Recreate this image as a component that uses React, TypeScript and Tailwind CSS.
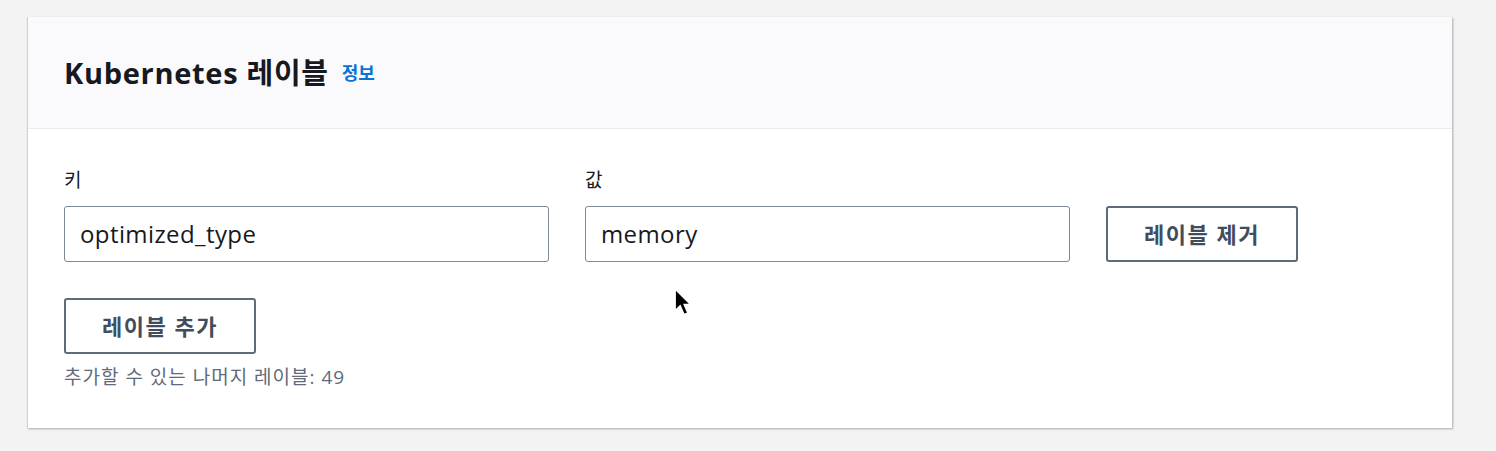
import React from "react";

const font = { fontFamily: '"Open Sans", "Noto Sans CJK KR", sans-serif' };

export default function App() {
  return (
    <div className="w-[1496px] h-[451px] bg-[#f3f3f3] pt-[17px] pl-[27px] relative" style={font}>
      <div className="w-[1425px] h-[411px] bg-white border-l border-[#cfcfcf] shadow-[1px_1px_2px_rgba(0,0,0,0.3)] flex flex-col">
        <div className="h-[112px] bg-[#fafafc] border-b border-[#e9ebed] flex items-center px-[36px]">
          <h2 className="text-[29px] tracking-[0.7px] font-bold text-[#16191f]">Kubernetes 레이블</h2>
          <span className="ml-[13px] mt-[2px] text-[18px] font-bold text-[#0972d3]">정보</span>
        </div>
        <div className="px-[36px] pt-[37px]">
          <div className="flex items-end gap-[36px]">
            <div className="flex flex-col w-[485px]">
              <label className="text-[19px] text-[#16191f] leading-[28px] mb-[12px]">키</label>
              <div className="h-[56px] border-[1.5px] border-[#7d8998] rounded-[3px] flex items-center px-[15px] text-[24px] tracking-[0.4px] text-[#16191f]">optimized_type</div>
            </div>
            <div className="flex flex-col w-[485px]">
              <label className="text-[19px] text-[#16191f] leading-[28px] mb-[12px]">값</label>
              <div className="h-[56px] border-[1.5px] border-[#7d8998] rounded-[3px] flex items-center px-[15px] text-[24px] tracking-[0.4px] text-[#16191f]">memory</div>
            </div>
            <button className="w-[192px] h-[56px] border-2 border-[#5f6b7a] rounded-[3px] bg-white text-[22px] tracking-[1.5px] font-bold text-[#414d5c]">레이블 제거</button>
          </div>
          <button className="mt-[36px] w-[192px] h-[56px] border-2 border-[#5f6b7a] rounded-[3px] bg-white text-[22px] tracking-[1.5px] font-bold text-[#414d5c]">레이블 추가</button>
          <div className="mt-[9px] text-[19px] tracking-[1px] text-[#5f6b7a]">추가할 수 있는 나머지 레이블: 49</div>
        </div>
      </div>
      <svg className="absolute left-[674px] top-[288px]" width="20" height="30" viewBox="0 0 16 24">
        <path d="M1 1 L1 18 L5 14 L8 21 L11 20 L8 13 L13 13 Z" fill="#000" stroke="#fff" strokeWidth="1" />
      </svg>
    </div>
  );
}
